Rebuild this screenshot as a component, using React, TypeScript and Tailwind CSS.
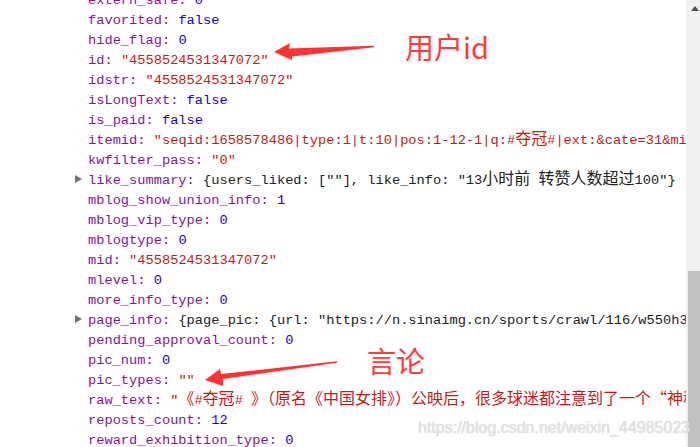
import React from "react";

type Kind = "num" | "str" | "bool" | "preview";

const rows: { k: string; v: string; t: Kind; expand?: boolean }[] = [
  { k: "extern_safe", v: "0", t: "num" },
  { k: "favorited", v: "false", t: "bool" },
  { k: "hide_flag", v: "0", t: "num" },
  { k: "id", v: '"4558524531347072"', t: "str" },
  { k: "idstr", v: '"4558524531347072"', t: "str" },
  { k: "isLongText", v: "false", t: "bool" },
  { k: "is_paid", v: "false", t: "bool" },
  {
    k: "itemid",
    v: '"seqid:1658578486|type:1|t:10|pos:1-12-1|q:#夺冠#|ext:&cate=31&mid=4558524531347072"',
    t: "str",
  },
  { k: "kwfilter_pass", v: '"0"', t: "str" },
  {
    k: "like_summary",
    v: '{users_liked: [""], like_info: "13小时前 转赞人数超过100"}',
    t: "preview",
    expand: true,
  },
  { k: "mblog_show_union_info", v: "1", t: "num" },
  { k: "mblog_vip_type", v: "0", t: "num" },
  { k: "mblogtype", v: "0", t: "num" },
  { k: "mid", v: '"4558524531347072"', t: "str" },
  { k: "mlevel", v: "0", t: "num" },
  { k: "more_info_type", v: "0", t: "num" },
  {
    k: "page_info",
    v: '{page_pic: {url: "https://n.sinaimg.cn/sports/crawl/116/w550h308/20201019/abcd.jpg"}}',
    t: "preview",
    expand: true,
  },
  { k: "pending_approval_count", v: "0", t: "num" },
  { k: "pic_num", v: "0", t: "num" },
  { k: "pic_types", v: '""', t: "str" },
  {
    k: "raw_text",
    v: '"《#夺冠# 》（原名《中国女排》）公映后，很多球迷都注意到了一个“神秘人”"',
    t: "str",
  },
  { k: "reposts_count", v: "12", t: "num" },
  { k: "reward_exhibition_type", v: "0", t: "num" },
];

const valueColor: Record<Kind, string> = {
  num: "text-[#1c00cf]",
  bool: "text-[#1c00cf]",
  str: "text-[#c41a16]",
  preview: "text-[#222222]",
};

// CJK glyphs in the console render wider than the mono font, so give them their own size
const Mixed = ({ text }: { text: string }) => {
  const parts = text.split(/([\u3000-\u9fff\uff00-\uffef\u201c\u201d]+)/);
  return (
    <>
      {parts.map((p, i) =>
        i % 2 === 1 ? (
          <span
            key={i}
            className="text-[16px] leading-[0]"
            style={{ fontFamily: '"Noto Sans CJK SC", sans-serif' }}
          >
            {p}
          </span>
        ) : (
          <span key={i}>{p}</span>
        )
      )}
    </>
  );
};

export default function App() {
  return (
    <div className="relative flex h-[447px] w-[700px] overflow-hidden bg-white">
      <div
        className="flex-1 overflow-hidden whitespace-nowrap pl-[75px] text-[13.7px]"
        style={{ fontFamily: '"Liberation Mono", "Noto Sans CJK SC", monospace' }}
      >
        <div className="mt-[-9px]">
          {rows.map((r) => (
            <div key={r.k} className="h-[20px] leading-[20px]">
              <span className="inline-block w-[13px] align-middle">
                {r.expand && (
                  <span className="mb-[2px] block h-0 w-0 border-y-[4.5px] border-l-[7px] border-y-transparent border-l-[#727272]" />
                )}
              </span>
              <span className="text-[#881391]">{r.k}:&nbsp;</span>
              <span className={valueColor[r.t]}>
                <Mixed text={r.v} />
              </span>
            </div>
          ))}
        </div>
      </div>

      {/* scrollbar */}
      <div className="flex w-[14px] shrink-0 flex-col bg-[#f1f1f1]">
        <div className="flex h-[17px] items-center justify-end pr-[1px]">
          <span className="block h-0 w-0 border-x-[4px] border-b-[5px] border-x-transparent border-b-[#505050]" />
        </div>
        <div className="flex-1" />
        <div className="ml-[2px] h-[176px] bg-[#c1c1c1]" />
      </div>

      {/* annotations */}
      <svg className="pointer-events-none absolute left-0 top-0" width="700" height="447">
        <polygon
          points="274,52 290,43 289,48.5 374,45.8 374,47.3 292,56.5 292,60"
          fill="#ff3333"
        />
        <polygon
          points="205,380 220,369 221,374 337,361.3 337,362.8 223,379 223,386"
          fill="#ff3333"
        />
      </svg>
      <div
        className="absolute left-[405px] top-[32px] text-[29px] leading-none text-[#ff3b3b]"
        style={{ fontFamily: '"Noto Sans CJK SC", "Liberation Sans", sans-serif' }}
      >
        用户id
      </div>
      <div
        className="absolute left-[367px] top-[346px] text-[29px] leading-none text-[#ff3b3b]"
        style={{ fontFamily: '"Noto Sans CJK SC", "Liberation Sans", sans-serif' }}
      >
        言论
      </div>
      <div
        className="absolute left-[418px] top-[420px] text-[16px] leading-none text-white/60 [text-shadow:0_0_1px_#b0b0b0]"
        style={{ fontFamily: '"Liberation Sans", Arial, sans-serif' }}
      >
        https://blog.csdn.net/weixin_44985023
      </div>
    </div>
  );
}
